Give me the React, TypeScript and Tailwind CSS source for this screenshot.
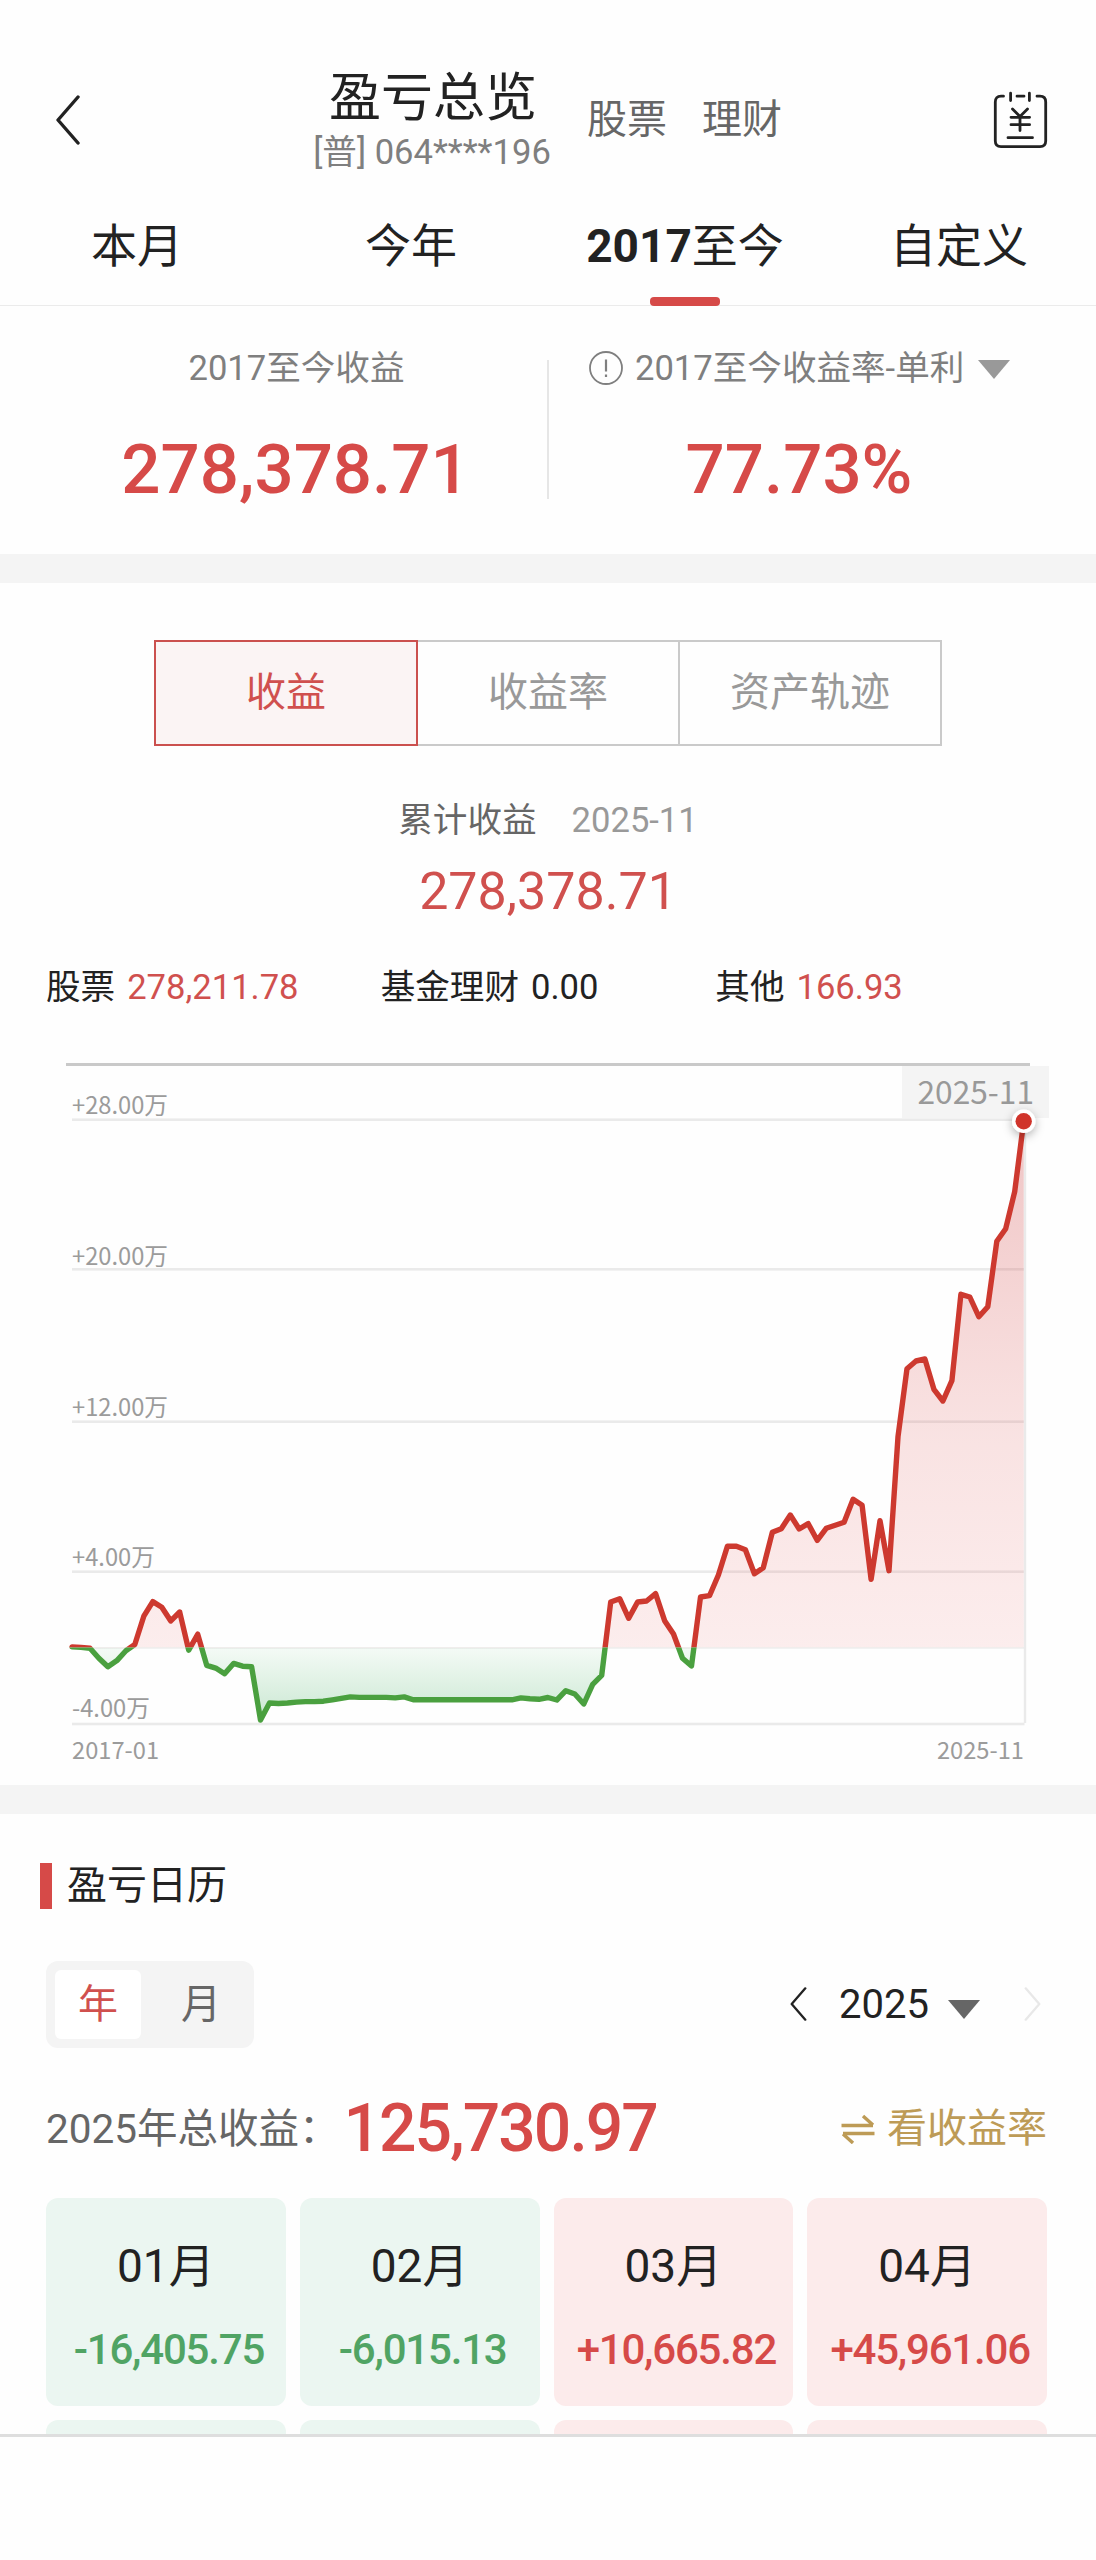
// src/screens/ProfitOverview.tsx
import { useState } from "react";
import clsx from "clsx";

const periods = [
  { key: "month", label: "本月" },
  { key: "year", label: "今年" },
  { key: "all", label: "2017至今" },
  { key: "custom", label: "自定义" },
];

const chartTabs = [
  { key: "profit", label: "收益" },
  { key: "rate", label: "收益率" },
  { key: "asset", label: "资产轨迹" },
];

const breakdown = [
  { label: "股票", value: "278,211.78", red: true },
  { label: "基金理财", value: "0.00", red: false },
  { label: "其他", value: "166.93", red: true },
];

const months = [
  { label: "01月", value: "-16,405.75" },
  { label: "02月", value: "-6,015.13" },
  { label: "03月", value: "+10,665.82" },
  { label: "04月", value: "+45,961.06" },
];

// Chart geometry, in svg units
const LEFT = 72;
const RIGHT = 1023.7;
const ZERO = 1647.5;

const grid = [
  { y: 1119.7, label: "+28.00万", base: 1113.5 },
  { y: 1269.3, label: "+20.00万", base: 1264.5 },
  { y: 1421.7, label: "+12.00万", base: 1416 },
  { y: 1571.7, label: "+4.00万", base: 1566 },
  { y: 1724, label: "-4.00万", base: 1717 },
];

// One point per month, 2017-01 → 2025-11
const series = [
  1646.9, 1647.4, 1648.3, 1658.2, 1666.7, 1660.6, 1650.7, 1644.5, 1616.2, 1601.6, 1607.2, 1620.9,
  1612, 1650.2, 1634.2, 1665.3, 1668.1, 1673.8, 1663.4, 1666.2, 1666.7, 1720, 1703, 1703.5,
  1703, 1702.1, 1701.6, 1701.6, 1701.2, 1699.8, 1698.3, 1696.9, 1697.4, 1697.4, 1697.4, 1697.4,
  1697.9, 1696.9, 1699.8, 1699.8, 1699.8, 1699.8, 1699.8, 1699.8, 1699.8, 1699.8, 1699.8, 1699.8,
  1699.8, 1699.8, 1697.9, 1698.8, 1699.3, 1697.5, 1700, 1690.7, 1694, 1704, 1684.3, 1675.3,
  1602, 1598.7, 1618.3, 1602, 1601, 1593.7, 1620.7, 1634, 1658.3, 1666, 1597, 1595.7,
  1575, 1546.3, 1546.3, 1549.7, 1573.7, 1567.7, 1532.3, 1528.7, 1515, 1529, 1523.7, 1540.3,
  1528.3, 1525.3, 1522.3, 1499.3, 1505.3, 1579.3, 1520.7, 1570.7, 1436.7, 1368.7, 1361, 1359,
  1389.3, 1401, 1380.7, 1294.3, 1297, 1316.7, 1306.7, 1241.3, 1228.7, 1191.7, 1121.3,
];

const step = (RIGHT - LEFT) / (series.length - 1);
const line = series
  .map((y, i) => `${i === 0 ? "M" : "L"}${(LEFT + i * step).toFixed(1)} ${y}`)
  .join(" ");
const area = `${line} L${RIGHT} ${ZERO} L${LEFT} ${ZERO} Z`;

function Chevron({ flip, className }: { flip?: boolean; className?: string }) {
  return (
    <svg viewBox="0 0 24 50" className={className} fill="none" stroke="currentColor" strokeLinecap="round">
      <path d={flip ? "M2 2 L22 25 L2 48" : "M22 2 L2 25 L22 48"} strokeWidth="3.4" strokeLinejoin="round" />
    </svg>
  );
}

function Caret({ className }: { className?: string }) {
  return (
    <svg viewBox="0 0 32 19" className={className} fill="currentColor">
      <path d="M0 0 H32 L16 19 Z" />
    </svg>
  );
}

function BillIcon() {
  return (
    <svg
      viewBox="0 0 60 62"
      className="h-[62px] w-[60px] text-[#222]"
      fill="none"
      stroke="currentColor"
      strokeWidth="2.8"
      strokeLinecap="round"
      strokeLinejoin="round"
    >
      <path d="M13.5 8.2 H11 Q5.3 8.2 5.3 14 V53 Q5.3 58.6 11 58.6 H50 Q55.7 58.6 55.7 53 V14 Q55.7 8.2 50 8.2 H47" />
      <path d="M27 8.2 H34 M20.6 5.2 V12.5 M39.4 5.2 V12.5" />
      <path d="M22.5 21 L30 28.5 L37.5 21 M30 28.5 V42.5 M21 29.3 H39.6 M21 36.7 H39.6 M18 49.7 H42.5" />
    </svg>
  );
}

function ProfitChart() {
  return (
    <svg viewBox="0 1040 1096 745" className="block h-[745px] w-full">
      <defs>
        <linearGradient id="gain" gradientUnits="userSpaceOnUse" x1="0" y1="1120" x2="0" y2="1648">
          <stop offset="0" stopColor="#c62828" stopOpacity="0.27" />
          <stop offset="0.6" stopColor="#d93a38" stopOpacity="0.14" />
          <stop offset="1" stopColor="#e64040" stopOpacity="0.09" />
        </linearGradient>
        <linearGradient id="loss" gradientUnits="userSpaceOnUse" x1="0" y1="1648" x2="0" y2="1712">
          <stop offset="0" stopColor="#35b055" stopOpacity="0.05" />
          <stop offset="1" stopColor="#2fa350" stopOpacity="0.23" />
        </linearGradient>
        <clipPath id="above">
          <rect x="0" y="1040" width="1096" height={ZERO - 1040} />
        </clipPath>
        <clipPath id="below">
          <rect x="0" y={ZERO} width="1096" height="120" />
        </clipPath>
        <filter id="dotShadow" x="-100%" y="-100%" width="300%" height="300%">
          <feDropShadow dx="0" dy="3" stdDeviation="5" floodColor="#000" floodOpacity="0.3" />
        </filter>
      </defs>

      <rect x="66" y="1063" width="964" height="3" fill="#c9c9c9" />
      {grid.map((g) => (
        <g key={g.label}>
          <rect x={LEFT} y={g.y - 1.3} width="952.5" height="2.6" fill="#eaeaea" />
          <text x={LEFT} y={g.base} fontSize="23.7" fill="#9b9b9b" className="font-['Noto_Sans_CJK_SC',sans-serif]">
            {g.label}
          </text>
        </g>
      ))}
      <rect x={LEFT} y="1647.2" width="952" height="1.6" fill="#efefef" />
      <rect x="1023.8" y="1120" width="2.4" height="603" fill="#eaeaea" />

      <path d={area} fill="url(#gain)" clipPath="url(#above)" />
      <path d={area} fill="url(#loss)" clipPath="url(#below)" />
      <g fill="none" strokeWidth="5.4" strokeLinejoin="round" strokeLinecap="round">
        <path d={line} stroke="#cd392f" clipPath="url(#above)" />
        <path d={line} stroke="#4aa03f" clipPath="url(#below)" />
      </g>

      {/* selected point */}
      <rect x="902" y="1066" width="147" height="52" fill="#f4f4f4" />
      <text x="917.5" y="1104" fontSize="31.7" fill="#999" className="font-['Noto_Sans_CJK_SC',sans-serif]">
        2025-11
      </text>
      <circle cx={RIGHT} cy="1121.3" r="11.7" fill="#fff" filter="url(#dotShadow)" />
      <circle cx={RIGHT} cy="1121.3" r="8.2" fill="#d0342b" />

      <g fontSize="23.7" fill="#9b9b9b" className="font-['Noto_Sans_CJK_SC',sans-serif]">
        <text x={LEFT} y="1759">2017-01</text>
        <text x="1024" y="1759" textAnchor="end">2025-11</text>
      </g>
    </svg>
  );
}

export default function App() {
  const [period, setPeriod] = useState("all");
  const [tab, setTab] = useState("profit");
  const [unit, setUnit] = useState("年");

  return (
    <div className="flex h-[2560px] w-[1096px] flex-col overflow-hidden bg-[#fefefe] font-['Roboto','Noto_Sans_CJK_SC',sans-serif] text-[#222]">
      <div className="h-[2434px] shrink-0 overflow-hidden">
        {/* Header */}
        <header className="flex h-[190px] pl-14">
          <Chevron className="mt-[95px] h-[50px] w-6" />
          <div className="ml-[233px] mt-[69px] w-[240px] text-center whitespace-nowrap">
            <h1 className="text-[52px] leading-[60px]">盈亏总览</h1>
            <div className="pr-0.5 text-[34.6px] leading-[46px] text-[#7f7f7f]">[普] 064****196</div>
          </div>
          <div className="ml-[34px] mt-[96px] flex gap-[35px] text-[40px] leading-[48px] text-[#666]">
            <span>股票</span>
            <span>理财</span>
          </div>
          <div className="mt-[88px] mr-[46px] ml-auto">
            <BillIcon />
          </div>
        </header>

        <nav className="grid h-[116px] grid-cols-4 border-b border-[#ebebeb]">
          {periods.map((p) => (
            <button
              key={p.key}
              onClick={() => setPeriod(p.key)}
              className={clsx(
                "flex flex-col items-center justify-between pt-7 text-[46px] leading-[56px]",
                period === p.key && "font-bold"
              )}
            >
              <span>
                {p.label.replace(/\D/g, "")}
                <span className="font-normal">{p.label.replace(/\d/g, "")}</span>
              </span>
              {period === p.key && <span className="-mb-px h-[9px] w-[70px] rounded bg-[#d64a48]" />}
            </button>
          ))}
        </nav>

        {/* Totals */}
        <section className="flex h-[248px]">
          <div className="w-[547px] pt-[37px] text-center">
            <div className="pl-[46px] text-[34.6px] leading-[50px] text-[#7f7f7f]">2017至今收益</div>
            <div className="mt-[37px] pl-[44px] text-[69px] leading-[80px] font-medium text-[#d64a48]">278,378.71</div>
          </div>
          <div className="mt-[54px] h-[139px] w-0.5 bg-[#e6e6e6]" />
          <div className="flex-1 pt-[37px]">
            <div className="flex items-center pl-10 text-[34.6px] leading-[50px] text-[#7f7f7f]">
              <svg viewBox="0 0 34 34" className="h-[34px] w-[34px]" fill="none" stroke="currentColor" strokeWidth="1.8">
                <circle cx="17" cy="17" r="16" />
                <path d="M17 8.5 V20.5 M17 23.5 V26" strokeWidth="2.2" />
              </svg>
              <span className="ml-3 whitespace-nowrap">2017至今收益率-单利</span>
              <Caret className="mt-0.5 ml-3.5 h-[19px] w-8 text-[#999]" />
            </div>
            <div className="mt-[37px] pr-[47px] text-center text-[69px] leading-[80px] font-medium text-[#d64a48]">77.73%</div>
          </div>
        </section>

        <div className="h-[29px] bg-[#f4f4f4]" />

        {/* Profit curve */}
        <section className="h-[457px] pt-[57px]">
          <div className="ml-[154px] flex h-[106px] w-[788px]">
            {chartTabs.map((t) => (
              <button
                key={t.key}
                onClick={() => setTab(t.key)}
                className={clsx(
                  "flex-1 border-2 pb-px text-[40px]",
                  tab === t.key
                    ? "border-[#cb504e] bg-[#fbf4f4] text-[#d0504e]"
                    : "border-l-0 border-[#cacaca] text-[#999]"
                )}
              >
                {t.label}
              </button>
            ))}
          </div>

          <div className="mt-[50px] flex justify-center gap-[35px] text-[34.6px] leading-[48px]">
            <span className="text-[#666]">累计收益</span>
            <span className="text-[#999]">2025-11</span>
          </div>
          <div className="mt-[16px] text-center text-[52px] leading-[64px] text-[#d0504e]">278,378.71</div>

          <div className="mx-[46px] mt-[39px] grid grid-cols-3 text-[34.6px] leading-[48px]">
            {breakdown.map((b) => (
              <div key={b.label} className="flex gap-3 whitespace-nowrap">
                <span>{b.label}</span>
                <span className={b.red ? "text-[#d0504e]" : ""}>{b.value}</span>
              </div>
            ))}
          </div>
        </section>

        <ProfitChart />

        <div className="h-[29px] bg-[#f4f4f4]" />

        {/* Calendar */}
        <section className="pt-[49px] pr-[49px] pl-[46px]">
          <h2 className="-ml-1.5 flex h-[46px] items-center text-[40px]">
            <span className="mr-[15px] h-[46px] w-3 bg-[#d64a48]" />
            <span className="-mt-px">盈亏日历</span>
          </h2>

          <div className="mt-[52px] flex items-center justify-between">
            <div className="flex h-[87px] w-[208px] rounded-xl bg-[#f4f4f4] p-[9px] text-[40px] leading-[68px]">
              {["年", "月"].map((u) => (
                <button
                  key={u}
                  onClick={() => setUnit(u)}
                  className={clsx("mr-[17px] w-[86px] shrink-0 rounded-md", unit === u ? "bg-white text-[#d0504e]" : "text-[#666]")}
                >
                  {u}
                </button>
              ))}
            </div>
            <div className="flex items-center pr-1.5 text-[40px] leading-[48px]">
              <Chevron className="-mt-0.5 h-[34px] w-[17px]" />
              <span className="ml-8">2025</span>
              <Caret className="mt-2.5 ml-[19px] h-[19px] w-8 text-[#666]" />
              <Chevron flip className="-mt-0.5 ml-[44px] h-[34px] w-[17px] text-[#e8e8e8]" />
            </div>
          </div>

          <div className="mt-[41px] flex h-[80px] items-center text-[40px]">
            <span className="text-[40.5px] text-[#666]">2025年总收益：</span>
            <span className="ml-1 text-[66px] leading-[80px] font-medium tracking-[-2px] text-[#d64a48]">125,730.97</span>
            <span className="ml-auto flex items-center text-[#bd9b56]">
              <svg viewBox="0 0 34 30" className="mr-3 h-[30px] w-[34px]" fill="none" stroke="currentColor" strokeWidth="3.4">
                <path d="M0.5 11.5 H32 M22 2 L32 11" />
                <path d="M33.5 19.5 H2 M12 29 L2 20" />
              </svg>
              看收益率
            </span>
          </div>

          <div className="mt-[29px] grid grid-cols-4 gap-3.5">
            {months.map((m) => (
              <div
                key={m.label}
                className={clsx(
                  "flex h-[208px] flex-col items-center rounded-xl pt-[38px]",
                  m.value.startsWith("-") ? "bg-[#ebf6f1]" : "bg-[#fcebeb]"
                )}
              >
                <span className="text-[46px] leading-[60px]">{m.label}</span>
                <span
                  className={clsx(
                    "mt-[24px] pl-1.5 text-[42px] leading-[60px] font-medium tracking-[-1.2px]",
                    m.value.startsWith("-") ? "text-[#50a464]" : "text-[#d64a48]"
                  )}
                >
                  {m.value}
                </span>
              </div>
            ))}
            {/* next row, cut off by the bottom bar */}
            {months.map((m) => (
              <div
                key={m.label + "-next"}
                className={clsx("h-[208px] rounded-xl", m.value.startsWith("-") ? "bg-[#ebf6f1]" : "bg-[#fcebeb]")}
              />
            ))}
          </div>
        </section>
      </div>
      <footer className="flex-1 border-t-[3px] border-[#dedede]" />
    </div>
  );
}
